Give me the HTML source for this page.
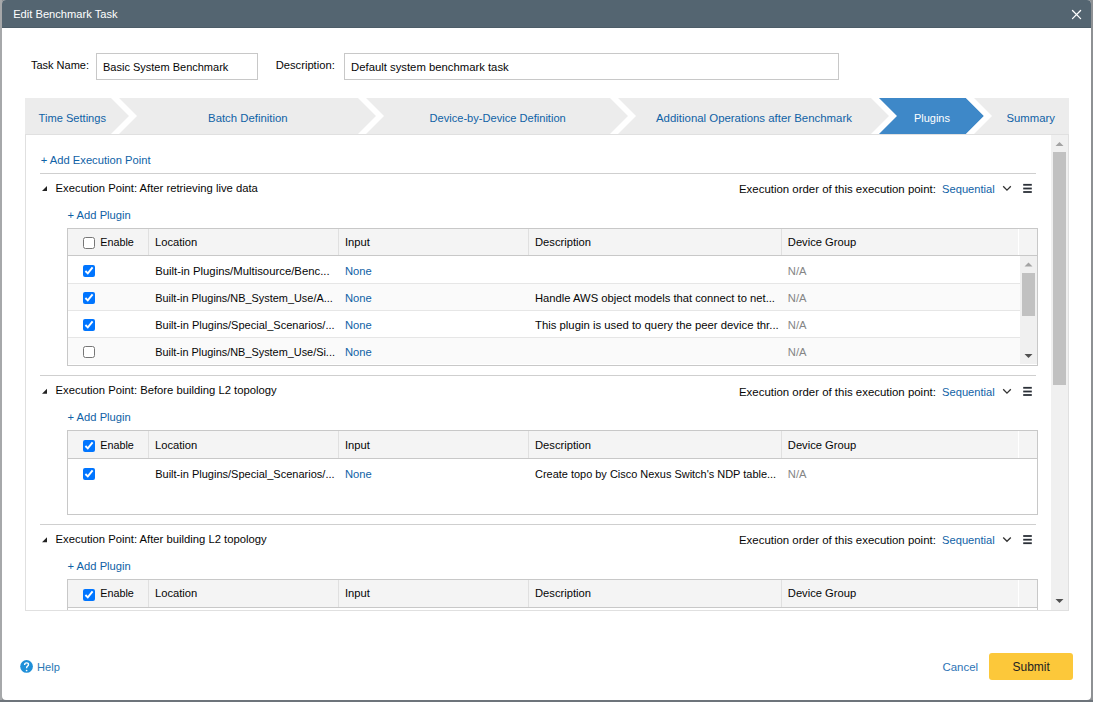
<!DOCTYPE html>
<html><head><meta charset="utf-8"><style>
html,body{margin:0;padding:0;}
body{width:1093px;height:702px;overflow:hidden;position:relative;background:#8e9194;font-family:"Liberation Sans",sans-serif;}
.t{position:absolute;white-space:nowrap;line-height:14px;}
input[type=checkbox]{margin:0;width:12px;height:12px;}
</style></head><body>
<div style="position:absolute;left:0px;top:0px;width:2px;height:702px;background:#a6a8aa"></div>
<div style="position:absolute;left:0px;top:700px;width:1093px;height:2px;background:#6d747b"></div>
<div style="position:absolute;left:2px;top:0px;width:1089px;height:700px;background:#fff;border-radius:4px"></div>
<div style="position:absolute;left:2px;top:0px;width:1089px;height:28px;background:#546571;border-radius:4px 4px 0 0"></div>
<div style="position:absolute;left:2px;top:27px;width:1089px;height:1px;background:#4d5d68"></div>
<div class="t" style="left:13.20px;top:7.04px;color:#fff;font-size:11.15px;">Edit Benchmark Task</div>
<div class="t" style="left:30.90px;top:58.19px;color:#060606;font-size:11.0px;">Task Name:</div>
<div style="position:absolute;left:96px;top:53px;width:162px;height:27px;box-sizing:border-box;border:1px solid #c8c8c8"></div>
<div class="t" style="left:103.00px;top:60.39px;color:#060606;font-size:11.0px;">Basic System Benchmark</div>
<div class="t" style="left:275.70px;top:58.22px;color:#060606;font-size:11.2px;">Description:</div>
<div style="position:absolute;left:344px;top:53px;width:495px;height:27px;box-sizing:border-box;border:1px solid #c8c8c8"></div>
<div class="t" style="left:351.10px;top:59.68px;color:#060606;font-size:11.3px;">Default system benchmark task</div>
<svg style="position:absolute;left:0;top:98px" width="1093" height="36" viewBox="0 0 1093 36"><rect x="25" y="0" width="1044" height="36" fill="#ececec"/><polygon points="111,0 119,0 137,18 119,36 111,36 129,18" fill="#fff"/><polygon points="358,0 366,0 384,18 366,36 358,36 376,18" fill="#fff"/><polygon points="610,0 618,0 636,18 618,36 610,36 628,18" fill="#fff"/><polygon points="871,0 879,0 897,18 879,36 871,36 889,18" fill="#fff"/><polygon points="879,0 966,0 984,18 966,36 879,36 897,18" fill="#3e88c8"/><polygon points="966,0 974,0 992,18 974,36 966,36 984,18" fill="#fff"/></svg>
<div class="t" style="left:38.60px;top:110.85px;color:#0f62a6;font-size:11.1px;">Time Settings</div>
<div class="t" style="left:208.10px;top:110.77px;color:#0f62a6;font-size:11.35px;">Batch Definition</div>
<div class="t" style="left:429.50px;top:110.85px;color:#0f62a6;font-size:11.1px;">Device-by-Device Definition</div>
<div class="t" style="left:656.00px;top:110.74px;color:#0f62a6;font-size:11.42px;">Additional Operations after Benchmark</div>
<div class="t" style="left:913.90px;top:110.89px;color:#fff;font-size:11.0px;">Plugins</div>
<div class="t" style="left:1006.50px;top:110.78px;color:#0f62a6;font-size:11.3px;">Summary</div>
<div style="position:absolute;left:25px;top:134px;width:1044px;height:477px;box-sizing:border-box;border:1px solid #e0e0e0"></div>
<div style="position:absolute;left:1051px;top:135px;width:17px;height:475px;background:#f0f0f0"></div>
<div style="position:absolute;left:1053px;top:152px;width:13px;height:233px;background:#c1c1c1"></div>
<div class="t" style="left:40.80px;top:152.72px;color:#0f62a6;font-size:11.2px;">+ Add Execution Point</div>
<div style="position:absolute;left:40px;top:173px;width:996px;height:1px;background:#cfcfcf"></div>
<div class="t" style="left:55.60px;top:180.79px;color:#060606;font-size:11.28px;">Execution Point: After retrieving live data</div>
<div class="t" style="left:739.00px;top:181.64px;color:#060606;font-size:11.43px;">Execution order of this execution point:</div>
<div class="t" style="left:942.10px;top:181.74px;color:#0f62a6;font-size:11.15px;">Sequential</div>
<div class="t" style="left:67.60px;top:207.72px;color:#0f62a6;font-size:11.2px;">+ Add Plugin</div>
<div style="position:absolute;left:67px;top:228px;width:971px;height:138px;box-sizing:border-box;border:1px solid #c8c8c8;background:#fff"></div>
<div style="position:absolute;left:68px;top:229px;width:969px;height:26px;background:#f4f4f4"></div>
<div style="position:absolute;left:68px;top:255px;width:969px;height:1px;background:#c8c8c8"></div>
<div style="position:absolute;left:148px;top:229px;width:1px;height:26px;background:#e0e0e0"></div>
<div style="position:absolute;left:338px;top:229px;width:1px;height:26px;background:#e0e0e0"></div>
<div style="position:absolute;left:528px;top:229px;width:1px;height:26px;background:#e0e0e0"></div>
<div style="position:absolute;left:781px;top:229px;width:1px;height:26px;background:#e0e0e0"></div>
<div style="position:absolute;left:1018px;top:229px;width:1px;height:26px;background:#fff"></div>
<input type="checkbox"  style="position:absolute;left:83px;top:237px;">
<div class="t" style="left:100.20px;top:234.96px;color:#060606;font-size:10.8px;">Enable</div>
<div class="t" style="left:155.00px;top:234.82px;color:#060606;font-size:11.2px;">Location</div>
<div class="t" style="left:345.00px;top:234.82px;color:#060606;font-size:11.2px;">Input</div>
<div class="t" style="left:535.00px;top:234.82px;color:#060606;font-size:11.2px;">Description</div>
<div class="t" style="left:787.80px;top:234.82px;color:#060606;font-size:11.2px;">Device Group</div>
<div style="position:absolute;left:68px;top:283px;width:952px;height:1px;background:#e6e6e6"></div>
<input type="checkbox" checked style="position:absolute;left:83px;top:265px;">
<div class="t" style="left:155.20px;top:263.67px;color:#060606;font-size:11.34px;">Built-in Plugins/Multisource/Benc...</div>
<div class="t" style="left:345.00px;top:263.72px;color:#0f62a6;font-size:11.2px;">None</div>
<div class="t" style="left:787.80px;top:263.72px;color:#858585;font-size:11.2px;">N/A</div>
<div style="position:absolute;left:68px;top:284px;width:952px;height:26px;background:#fafafa"></div>
<div style="position:absolute;left:68px;top:310px;width:952px;height:1px;background:#e6e6e6"></div>
<input type="checkbox" checked style="position:absolute;left:83px;top:292px;">
<div class="t" style="left:155.20px;top:290.82px;color:#060606;font-size:10.92px;">Built-in Plugins/NB_System_Use/A...</div>
<div class="t" style="left:345.00px;top:290.72px;color:#0f62a6;font-size:11.2px;">None</div>
<div class="t" style="left:535.00px;top:290.72px;color:#060606;font-size:11.21px;">Handle AWS object models that connect to net...</div>
<div class="t" style="left:787.80px;top:290.72px;color:#858585;font-size:11.2px;">N/A</div>
<div style="position:absolute;left:68px;top:337px;width:952px;height:1px;background:#e6e6e6"></div>
<input type="checkbox" checked style="position:absolute;left:83px;top:319px;">
<div class="t" style="left:155.20px;top:317.78px;color:#060606;font-size:11.03px;">Built-in Plugins/Special_Scenarios/...</div>
<div class="t" style="left:345.00px;top:317.72px;color:#0f62a6;font-size:11.2px;">None</div>
<div class="t" style="left:535.00px;top:317.67px;color:#060606;font-size:11.33px;">This plugin is used to query the peer device thr...</div>
<div class="t" style="left:787.80px;top:317.72px;color:#858585;font-size:11.2px;">N/A</div>
<div style="position:absolute;left:68px;top:338px;width:952px;height:26px;background:#fafafa"></div>
<input type="checkbox"  style="position:absolute;left:83px;top:346px;">
<div class="t" style="left:155.20px;top:344.82px;color:#060606;font-size:10.9px;">Built-in Plugins/NB_System_Use/Si...</div>
<div class="t" style="left:345.00px;top:344.72px;color:#0f62a6;font-size:11.2px;">None</div>
<div class="t" style="left:787.80px;top:344.72px;color:#858585;font-size:11.2px;">N/A</div>
<div style="position:absolute;left:1020px;top:256px;width:17px;height:108px;background:#f0f0f0"></div>
<div style="position:absolute;left:1022px;top:273px;width:13px;height:43px;background:#c1c1c1"></div>
<div style="position:absolute;left:40px;top:375px;width:996px;height:1px;background:#cfcfcf"></div>
<div class="t" style="left:55.60px;top:382.89px;color:#060606;font-size:11.28px;">Execution Point: Before building L2 topology</div>
<div class="t" style="left:739.00px;top:384.64px;color:#060606;font-size:11.43px;">Execution order of this execution point:</div>
<div class="t" style="left:942.10px;top:384.74px;color:#0f62a6;font-size:11.15px;">Sequential</div>
<div class="t" style="left:67.60px;top:410.32px;color:#0f62a6;font-size:11.2px;">+ Add Plugin</div>
<div style="position:absolute;left:67px;top:430px;width:971px;height:85px;box-sizing:border-box;border:1px solid #c8c8c8;background:#fff"></div>
<div style="position:absolute;left:68px;top:431px;width:969px;height:27px;background:#f4f4f4"></div>
<div style="position:absolute;left:68px;top:458px;width:969px;height:1px;background:#c8c8c8"></div>
<div style="position:absolute;left:148px;top:431px;width:1px;height:27px;background:#e0e0e0"></div>
<div style="position:absolute;left:338px;top:431px;width:1px;height:27px;background:#e0e0e0"></div>
<div style="position:absolute;left:528px;top:431px;width:1px;height:27px;background:#e0e0e0"></div>
<div style="position:absolute;left:781px;top:431px;width:1px;height:27px;background:#e0e0e0"></div>
<div style="position:absolute;left:1018px;top:431px;width:1px;height:27px;background:#fff"></div>
<input type="checkbox" checked style="position:absolute;left:83px;top:440px;">
<div class="t" style="left:100.20px;top:438.16px;color:#060606;font-size:10.8px;">Enable</div>
<div class="t" style="left:155.00px;top:438.02px;color:#060606;font-size:11.2px;">Location</div>
<div class="t" style="left:345.00px;top:438.02px;color:#060606;font-size:11.2px;">Input</div>
<div class="t" style="left:535.00px;top:438.02px;color:#060606;font-size:11.2px;">Description</div>
<div class="t" style="left:787.80px;top:438.02px;color:#060606;font-size:11.2px;">Device Group</div>
<input type="checkbox" checked style="position:absolute;left:83px;top:468px;">
<div class="t" style="left:155.20px;top:466.78px;color:#060606;font-size:11.03px;">Built-in Plugins/Special_Scenarios/...</div>
<div class="t" style="left:345.00px;top:466.72px;color:#0f62a6;font-size:11.2px;">None</div>
<div class="t" style="left:535.00px;top:466.80px;color:#060606;font-size:10.96px;">Create topo by Cisco Nexus Switch's NDP table...</div>
<div class="t" style="left:787.80px;top:466.72px;color:#858585;font-size:11.2px;">N/A</div>
<div style="position:absolute;left:40px;top:524px;width:996px;height:1px;background:#cfcfcf"></div>
<div class="t" style="left:55.60px;top:531.59px;color:#060606;font-size:11.28px;">Execution Point: After building L2 topology</div>
<div class="t" style="left:739.00px;top:532.84px;color:#060606;font-size:11.43px;">Execution order of this execution point:</div>
<div class="t" style="left:942.10px;top:532.94px;color:#0f62a6;font-size:11.15px;">Sequential</div>
<div class="t" style="left:67.60px;top:558.82px;color:#0f62a6;font-size:11.2px;">+ Add Plugin</div>
<div style="position:absolute;left:67px;top:579px;width:971px;height:40px;box-sizing:border-box;border:1px solid #c8c8c8;background:#fff"></div>
<div style="position:absolute;left:68px;top:580px;width:969px;height:27px;background:#f4f4f4"></div>
<div style="position:absolute;left:68px;top:607px;width:969px;height:1px;background:#c8c8c8"></div>
<div style="position:absolute;left:148px;top:580px;width:1px;height:27px;background:#e0e0e0"></div>
<div style="position:absolute;left:338px;top:580px;width:1px;height:27px;background:#e0e0e0"></div>
<div style="position:absolute;left:528px;top:580px;width:1px;height:27px;background:#e0e0e0"></div>
<div style="position:absolute;left:781px;top:580px;width:1px;height:27px;background:#e0e0e0"></div>
<div style="position:absolute;left:1018px;top:580px;width:1px;height:27px;background:#fff"></div>
<input type="checkbox" checked style="position:absolute;left:83px;top:589px;">
<div class="t" style="left:100.20px;top:586.36px;color:#060606;font-size:10.8px;">Enable</div>
<div class="t" style="left:155.00px;top:586.22px;color:#060606;font-size:11.2px;">Location</div>
<div class="t" style="left:345.00px;top:586.22px;color:#060606;font-size:11.2px;">Input</div>
<div class="t" style="left:535.00px;top:586.22px;color:#060606;font-size:11.2px;">Description</div>
<div class="t" style="left:787.80px;top:586.22px;color:#060606;font-size:11.2px;">Device Group</div>
<div style="position:absolute;left:26px;top:611px;width:1042px;height:40px;background:#fff"></div>
<div style="position:absolute;left:25px;top:610px;width:1044px;height:1px;background:#e0e0e0"></div>
<div class="t" style="left:37.00px;top:660.05px;color:#2a78b4;font-size:11.1px;">Help</div>
<div class="t" style="left:942.50px;top:660.03px;color:#2d73b6;font-size:11.45px;">Cancel</div>
<div style="position:absolute;left:989px;top:653px;width:84px;height:27px;background:#fcc83a;border-radius:3px"></div>
<div class="t" style="left:1012.50px;top:659.94px;color:#222;font-size:12px;">Submit</div>
<svg style="position:absolute;left:0;top:0" width="1093" height="702" viewBox="0 0 1093 702">
<path d="M1072.5 10.5 L1080.6 18.6 M1080.6 10.5 L1072.5 18.6" stroke="#fff" stroke-width="1.3" stroke-linecap="round"/>
<polygon points="1055.5,146 1059.5,142 1063.5,146" fill="#a3a3a3"/>
<polygon points="1055.5,599 1059.5,603 1063.5,599" fill="#505050"/>
<polygon points="42,191.00 47,186.00 47,191.00" fill="#222"/>
<path d="M1003.2 186.30 L1007 190.10 L1010.8 186.30" stroke="#333" stroke-width="1.3" fill="none"/>
<rect x="1023.2" y="183.90" width="8.6" height="1.8" fill="#2b3038"/>
<rect x="1023.2" y="187.60" width="8.6" height="1.8" fill="#2b3038"/>
<rect x="1023.2" y="191.10" width="8.6" height="1.8" fill="#2b3038"/>
<polygon points="1024.5,266.5 1028.5,262.5 1032.5,266.5" fill="#a3a3a3"/>
<polygon points="1024.5,354 1028.5,358 1032.5,354" fill="#505050"/>
<polygon points="42,393.80 47,388.80 47,393.80" fill="#222"/>
<path d="M1003.2 389.30 L1007 393.10 L1010.8 389.30" stroke="#333" stroke-width="1.3" fill="none"/>
<rect x="1023.2" y="386.90" width="8.6" height="1.8" fill="#2b3038"/>
<rect x="1023.2" y="390.60" width="8.6" height="1.8" fill="#2b3038"/>
<rect x="1023.2" y="394.10" width="8.6" height="1.8" fill="#2b3038"/>
<polygon points="42,542.20 47,537.20 47,542.20" fill="#222"/>
<path d="M1003.2 537.50 L1007 541.30 L1010.8 537.50" stroke="#333" stroke-width="1.3" fill="none"/>
<rect x="1023.2" y="535.10" width="8.6" height="1.8" fill="#2b3038"/>
<rect x="1023.2" y="538.80" width="8.6" height="1.8" fill="#2b3038"/>
<rect x="1023.2" y="542.30" width="8.6" height="1.8" fill="#2b3038"/>
<circle cx="26.55" cy="666.45" r="6.35" fill="#1f8fd8"/>
<path d="M24.6 664.9 Q24.6 662.9 26.6 662.9 Q28.5 662.9 28.5 664.6 Q28.5 665.6 27.5 666.2 Q26.6 666.7 26.6 668.2" stroke="#fff" stroke-width="1.4" fill="none"/>
<circle cx="26.6" cy="670.5" r="0.85" fill="#fff"/>
</svg>
</body></html>
